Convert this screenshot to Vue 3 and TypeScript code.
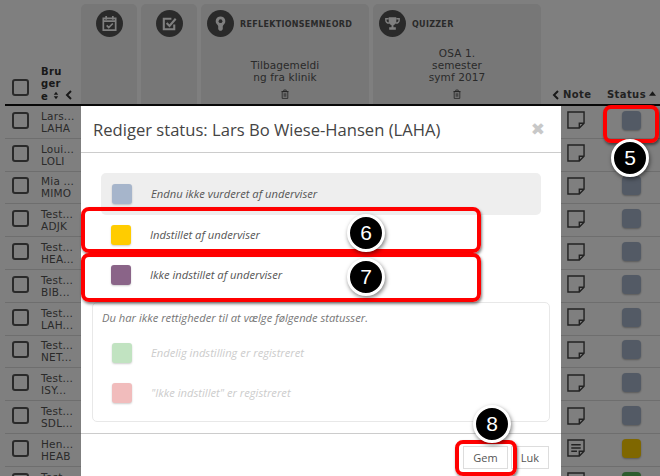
<script setup lang="ts">
interface Row { name: string; code: string; note: boolean; status: string }
const rows: Row[] = [
  { name: 'Lars...', code: 'LAHA', note: false, status: '#a6b5cb' },
  { name: 'Loui...', code: 'LOLI', note: false, status: '#a6b5cb' },
  { name: 'Mia ...', code: 'MIMO', note: false, status: '#a6b5cb' },
  { name: 'Test...', code: 'ADJK', note: false, status: '#a6b5cb' },
  { name: 'Test...', code: 'HEA...', note: false, status: '#a6b5cb' },
  { name: 'Test...', code: 'BIB...', note: false, status: '#a6b5cb' },
  { name: 'Test...', code: 'LAH...', note: false, status: '#a6b5cb' },
  { name: 'Test...', code: 'NET...', note: false, status: '#a6b5cb' },
  { name: 'Test...', code: 'ISY...', note: false, status: '#a6b5cb' },
  { name: 'Test...', code: 'SDL...', note: false, status: '#a6b5cb' },
  { name: 'Hen...', code: 'HEAB', note: true, status: '#ffcf00' },
  { name: 'Test...', code: 'TEST', note: true, status: '#5cb85c' }
]
</script>

<template>
  <div class="page">
    <div class="thead">
      <div class="th-user">
        <span class="check"></span>
        <div class="th-title">Bru<br />ger<br />e <svg class="sort" viewBox="0 0 8 10"><path d="M4 0l3 4H1zM4 10L1 6h6z" /></svg><svg class="chev" viewBox="0 0 8 10"><path d="M6 1L2 5l4 4" /></svg></div>
      </div>
      <div class="card small">
        <span class="circle">
          <svg viewBox="0 0 20 20" class="ico"><path d="M3.500 4.500h13v12.500h-13zM3.500 7.500h13M6.500 2v4M13.500 2v4M7 12l2.200 2.200L13.500 10" /></svg>
        </span>
      </div>
      <div class="card small">
        <span class="circle">
          <svg viewBox="0 0 20 20" class="ico thick"><path d="M15 11v5H4V5h8M7 9.500l3 3L16.500 5" /></svg>
        </span>
      </div>
      <div class="card wide">
        <div class="card-head">
          <span class="circle">
            <svg viewBox="0 0 20 20" class="ico fill"><path d="M10 2.500a5 5 0 0 1 3 9l-.6 1.300v3.200L11 17.500H9l-1.400-1.500v-3.200L7 11.500a5 5 0 0 1 3-9z" /><circle class="hole" cx="10" cy="7.500" r="2" /></svg>
          </span>
          <span class="card-title">REFLEKTIONSEMNEORD</span>
        </div>
        <div class="card-text">Tilbagemeldi<br />ng fra klinik</div>
        <svg class="trash" viewBox="0 0 10 12"><path d="M1.500 3h7v8.500h-7zM0.500 3h9M3.500 3V1h3v2M4 5v4.500M6 5v4.500" /></svg>
      </div>
      <div class="card wide">
        <div class="card-head">
          <span class="circle">
            <svg viewBox="0 0 20 20" class="ico fill"><path d="M6 3.500h8v4.500a4 4 0 0 1-3 3.800V14h2.500v2.500h-7V14H9v-2.200A4 4 0 0 1 6 8z" /><path class="line" d="M6 5H3v1.500A3 3 0 0 0 6.500 9.500M14 5h3v1.500a3 3 0 0 1-3.500 3" /></svg>
          </span>
          <span class="card-title">QUIZZER</span>
        </div>
        <div class="card-text">OSA 1.<br />semester<br />symf 2017</div>
        <svg class="trash" viewBox="0 0 10 12"><path d="M1.500 3h7v8.500h-7zM0.500 3h9M3.500 3V1h3v2M4 5v4.500M6 5v4.500" /></svg>
      </div>
      <div class="th-note"><svg class="chev" viewBox="0 0 8 10"><path d="M6 1L2 5l4 4" /></svg> Note</div>
      <div class="th-status">Status <svg class="up" viewBox="0 0 8 5"><path d="M4 0l4 5H0z" /></svg></div>
    </div>

    <div class="tbody">
      <div v-for="(r, i) in rows" :key="i" class="row">
        <div class="cell-user">
          <span class="check"></span>
          <div class="who">{{ r.name }}<br />{{ r.code }}</div>
        </div>
        <div class="cell-gap"></div>
        <div class="cell-note">
          <svg class="note" viewBox="0 0 19 19">
            <path d="M1 1h17v12l-5 5H1zM18 13h-5v5" />
            <path v-if="r.note" d="M4.500 6h10M4.500 9.500h10M4.500 13h6" />
          </svg>
        </div>
        <div class="cell-status"><span class="status" :style="{ background: r.status }"></span></div>
      </div>
    </div>

    <div class="overlay"></div>

    <div class="modal">
      <div class="m-head">
        <h2>Rediger status: Lars Bo Wiese-Hansen (LAHA)</h2>
        <span class="close">✖</span>
      </div>
      <div class="m-body">
        <div class="opt current"><span class="sw" style="background:#a6b5cb"></span><span class="lbl">Endnu ikke vurderet af underviser</span></div>
        <div class="opt"><span class="sw" style="background:#ffcc00"></span><span class="lbl">Indstillet af underviser</span></div>
        <div class="opt"><span class="sw" style="background:#8a6488"></span><span class="lbl">Ikke indstillet af underviser</span></div>
        <div class="locked">
          <p>Du har ikke rettigheder til at vælge følgende statusser.</p>
          <div class="opt off"><span class="sw" style="background:#c1e3c1"></span><span class="lbl">Endelig indstilling er registreret</span></div>
          <div class="opt off"><span class="sw" style="background:#f1bcbc"></span><span class="lbl">"Ikke indstillet" er registreret</span></div>
        </div>
      </div>
      <div class="m-foot">
        <button class="btn gem">Gem</button>
        <button class="btn luk">Luk</button>
      </div>
    </div>

    <div class="mark m5"></div>
    <div class="mark m6"></div>
    <div class="mark m7"></div>
    <div class="mark m8"></div>
    <span class="badge b5">5</span>
    <span class="badge b6">6</span>
    <span class="badge b7">7</span>
    <span class="badge b8">8</span>
  </div>
</template>

<style>
html, body { margin: 0; background: #fff; }
</style>

<style scoped>
.page {
  position: relative;
  width: 660px;
  height: 476px;
  overflow: hidden;
  background: #fff;
  font-family: "DejaVu Sans", Verdana, sans-serif;
  font-size: 11px;
  color: #444;
}
.thead {
  display: flex;
  align-items: stretch;
  gap: 4px;
  height: 104px;
  margin-left: 5px;
  padding-top: 4px;
  box-sizing: border-box;
}
.th-user {
  width: 72px;
  display: flex;
  align-items: flex-end;
  gap: 12px;
  padding: 0 0 1px 7px;
  box-sizing: border-box;
}
.th-user .check { margin-bottom: 7px; }
.th-title { font-weight: 700; font-size: 10px; line-height: 12px; letter-spacing: .3px; color: #333; white-space: nowrap; }
.sort { width: 6px; height: 9px; margin-left: 1px; fill: #333; }
.chev { width: 8px; height: 10px; margin-left: 6px; fill: none; stroke: #333; stroke-width: 2; }
.check {
  flex: none;
  display: block;
  width: 17px;
  height: 17px;
  border: 2px solid #555;
  border-radius: 3px;
  box-sizing: border-box;
}
.card {
  background: #eee;
  border-radius: 5px 5px 0 0;
  box-sizing: border-box;
  display: flex;
  flex-direction: column;
  align-items: center;
}
.card.small { width: 56px; padding-top: 6px; }
.card.wide { width: 168px; padding: 6px 0 0; }
.card-head { align-self: stretch; display: flex; align-items: center; gap: 6px; padding-left: 6px; }
.circle {
  display: flex;
  align-items: center;
  justify-content: center;
  width: 27px;
  height: 27px;
  border-radius: 50%;
  background: #555;
}
.ico { width: 19px; height: 19px; fill: none; stroke: #fff; stroke-width: 1.800; }
.ico.thick { stroke-width: 2.200; }
.ico.fill { fill: #fff; stroke: none; }
.ico .hole { fill: #555; }
.ico .line { fill: none; stroke: #fff; stroke-width: 1.500; }
.card-title { font-weight: 700; font-size: 8px; letter-spacing: .3px; color: #555; padding-top: 2px; }
.card-text {
  width: 70px;
  margin-top: auto;
  text-align: center;
  font-size: 10.500px;
  line-height: 12px;
  letter-spacing: .1px;
  color: #555;
}
.trash { flex: none; width: 8px; height: 10px; margin: 6px 0 5px; fill: none; stroke: #444; stroke-width: 1; }
.th-note, .th-status {
  display: flex;
  align-items: center;
  align-self: flex-end;
  font-weight: 700;
  font-size: 10px;
  line-height: 12px;
  letter-spacing: .4px;
  color: #444;
  padding-bottom: 3px;
}
.th-note { width: 47px; margin-left: 7px; }
.th-note .chev { margin: 0 3px 0 0; }
.th-status { margin-left: 4px; }
.up { width: 7px; height: 5px; margin: 0 0 3px 3px; fill: #333; }
.tbody {
  margin-left: 5px;
  border-top: 2px solid #111;
}
.row { display: flex; height: 32.800px; box-sizing: border-box; border-bottom: 1px solid #ddd; padding-bottom: 3px; }
.cell-user { width: 72px; display: flex; align-items: center; gap: 12px; padding-left: 7px; box-sizing: border-box; }
.who { padding-top: 3px; font-size: 10.500px; line-height: 12px; letter-spacing: .2px; color: #555; white-space: nowrap; }
.cell-gap { width: 484px; background: #fff; }
.cell-note { width: 40px; display: flex; align-items: center; box-sizing: border-box; }
.note { width: 18px; height: 18px; fill: none; stroke: #444; stroke-width: 1.500; margin-left: 6px; }
.cell-status { flex: 1; display: flex; align-items: center; padding-left: 21px; }
.status { width: 19px; height: 19px; border-radius: 4px; box-shadow: 0 1px 2px rgba(0,0,0,.3); }

.overlay { position: absolute; inset: 0; background: rgba(0,0,0,.5); }

.modal {
  position: absolute;
  left: 81px;
  top: 106px;
  width: 480px;
  height: 370px;
  background: #fff;
  font-family: "Open Sans", sans-serif;
  box-sizing: border-box;
  display: flex;
  flex-direction: column;
}
.m-head {
  flex: none;
  height: 47px;
  box-sizing: border-box;
  border-bottom: 1px solid #ccc;
  display: flex;
  align-items: center;
  justify-content: space-between;
  padding: 0 16px 0 12px;
}
h2 { margin: 0; font-size: 16.600px; font-weight: 400; color: #444; white-space: nowrap; }
.close { font-size: 17px; color: #c8c8c8; line-height: 1; font-family: "DejaVu Sans", sans-serif; }
.m-body { flex: 1; min-height: 0; padding: 20px 11px 11px; box-sizing: border-box; display: flex; flex-direction: column; }
.opt {
  flex: none;
  display: flex;
  align-items: center;
  gap: 19px;
  margin: 0 9px;
  height: 40px;
  padding-left: 10px;
  font-size: 11.200px;
  font-style: italic;
  color: #555;
}
.lbl { padding-bottom: 2px; }
.opt.current { height: 42px; padding-left: 11px; background: #eee; border-radius: 5px; }
.sw { flex: none; width: 20px; height: 20px; border-radius: 3px; box-shadow: 0 1px 2px rgba(0,0,0,.2); }
.locked {
  flex: none;
  margin-top: 7px;
  height: 120px;
  box-sizing: border-box;
  border: 1px solid #e8e8e8;
  border-radius: 5px;
  padding-top: 8px;
}
.locked p { margin: 0 0 8px 9px; font-size: 11.200px; font-style: italic; color: #777; line-height: 14px; }
.opt.off { margin: 0 9px; color: #ccc; }
.m-foot {
  flex: none;
  height: 43px;
  box-sizing: border-box;
  border-top: 1px solid #ccc;
  display: flex;
  justify-content: flex-end;
  gap: 3px;
  padding: 12px 12px 0 0;
}
.btn {
  height: 23px;
  padding: 0;
  background: #fff;
  border: 1px solid #ddd;
  font-family: "Open Sans", sans-serif;
  font-size: 11px;
  color: #555;
}
.gem { width: 45px; }
.luk { width: 38px; }

.mark {
  position: absolute;
  box-sizing: border-box;
  border: 4px solid #f00;
  border-radius: 8px;
  box-shadow: 1px 2px 3px rgba(0,0,0,.5);
}
.m5 { left: 603px; top: 105px; width: 56px; height: 38px; }
.m6 { left: 81px; top: 207px; width: 400px; height: 46px; }
.m7 { left: 81px; top: 253px; width: 400px; height: 49px; }
.m8 { left: 455px; top: 440px; width: 62px; height: 36px; }
.badge {
  position: absolute;
  box-sizing: border-box;
  width: 38px;
  height: 38px;
  border-radius: 50%;
  border: 3px solid #fff;
  background: #000;
  color: #fff;
  font-family: "Liberation Sans", Arial, sans-serif;
  font-size: 21px;
  line-height: 32px;
  text-align: center;
  box-shadow: 1px 2px 4px rgba(0,0,0,.5);
}
.b5 { left: 611px; top: 139px; }
.b6 { left: 347px; top: 214px; }
.b7 { left: 347px; top: 258px; }
.b8 { left: 473px; top: 405px; }
</style>
